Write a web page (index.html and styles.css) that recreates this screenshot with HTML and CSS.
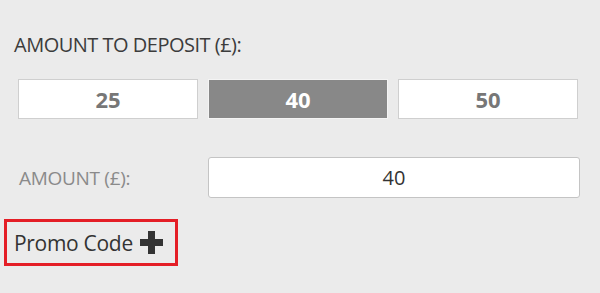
FILE: index.html
```html
<!DOCTYPE html>
<html>
<head>
<meta charset="utf-8">
<link rel="stylesheet" href="styles.css">
</head>
<body>
<div class="form">
  <div class="title">AMOUNT TO DEPOSIT (£):</div>
  <div class="presets">
    <div class="preset">25</div>
    <div class="preset active">40</div>
    <div class="preset">50</div>
  </div>
  <div class="amount-row">
    <div class="amount-label">AMOUNT (£):</div>
    <div class="amount-input">40</div>
  </div>
  <div class="promo">
    <span class="promo-text">Promo Code</span>
    <svg class="plus" width="23" height="23" viewBox="0 0 23 23"><path d="M8 0h7v8h8v7h-8v8H8v-8H0V8h8z" fill="#333"/></svg>
  </div>
</div>
</body>
</html>
```
FILE: styles.css
```css
html, body {
  margin: 0;
  padding: 0;
  background: #ebebeb;
  font-family: "Open Sans", "Noto Sans", sans-serif;
}
.form {
  width: 600px;
  height: 293px;
  padding-top: 32px;
  box-sizing: border-box;
}
.title {
  margin-left: 14px;
  font-size: 20px;
  line-height: 26px;
  color: #3c3c3c;
  letter-spacing: -0.5px;
}
.presets {
  display: flex;
  gap: 10px;
  margin: 21px 0 0 18px;
}
.preset {
  width: 180px;
  height: 40px;
  box-sizing: border-box;
  background: #fff;
  border: 1px solid #cfcfcf;
  display: flex;
  align-items: center;
  justify-content: center;
  font-size: 22px;
  font-weight: 700;
  color: #777;
}
.preset.active {
  background: #888;
  border-color: #f4f4f4;
  color: #fff;
}
.amount-row {
  display: flex;
  align-items: center;
  margin: 38px 0 0 19px;
}
.amount-label {
  width: 189px;
  font-size: 19px;
  color: #8a8a8a;
  letter-spacing: -0.3px;
}
.amount-input {
  width: 372px;
  height: 41px;
  box-sizing: border-box;
  background: #fff;
  border: 1px solid #c4c4c4;
  border-radius: 3px;
  display: flex;
  align-items: center;
  justify-content: center;
  font-size: 20px;
  color: #333;
}
.promo {
  display: inline-flex;
  align-items: center;
  gap: 7px;
  margin: 21px 0 0 4px;
  width: 174px;
  height: 47px;
  box-sizing: border-box;
  border: 3px solid #e41e26;
  padding-left: 7px;
}
.promo-text {
  font-size: 21px;
  color: #333;
  letter-spacing: -0.3px;
}
.plus {
  width: 23px;
  height: 23px;
}
```
